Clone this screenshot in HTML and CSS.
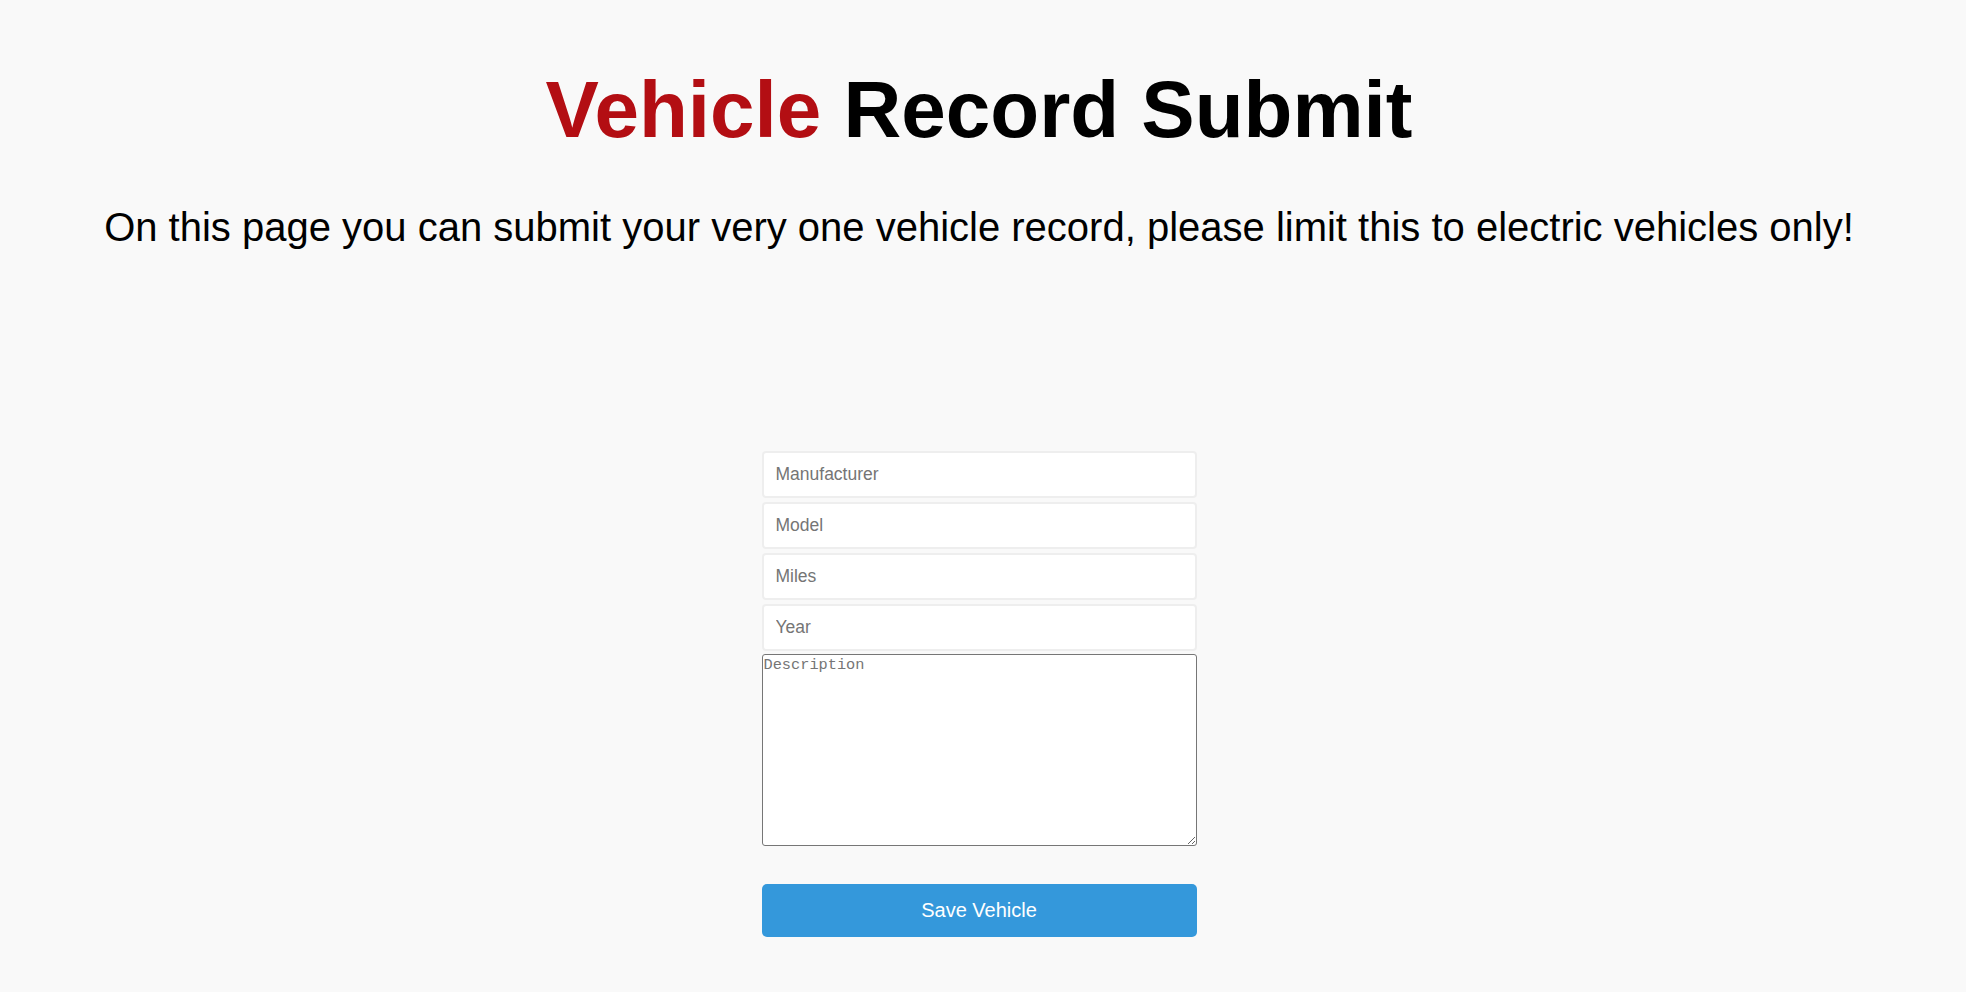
FILE: index.html
```html
<!DOCTYPE html>
<html lang="en">
<head>
<meta charset="utf-8">
<title>Vehicle Record Submit</title>
<link rel="stylesheet" href="styles.css">
</head>
<body>
  <main class="page">
    <h1 class="title"><span class="title-accent">Vehicle</span> Record Submit</h1>
    <p class="intro">On this page you can submit your very one vehicle record, please limit this to electric vehicles only!</p>
    <form class="vehicle-form">
      <input class="field" type="text" placeholder="Manufacturer">
      <input class="field" type="text" placeholder="Model">
      <input class="field" type="text" placeholder="Miles">
      <input class="field" type="text" placeholder="Year">
      <textarea class="description" placeholder="Description"></textarea>
      <button class="save-btn" type="button">Save Vehicle</button>
    </form>
  </main>
</body>
</html>
```

FILE: styles.css
```css
html, body {
  margin: 0;
  padding: 0;
  background: #f9f9f9;
}

body {
  font-family: "Liberation Sans", Arial, sans-serif;
  color: #000;
}

.page {
  padding-right: 8px;
  padding-bottom: 40px;
}

.title {
  margin: 64px 0 49px;
  font-size: 80px;
  font-weight: bold;
  line-height: normal;
  text-align: center;
}

.title-accent {
  color: #b30e13;
}

.intro {
  margin: 0;
  font-size: 40px;
  line-height: normal;
  text-align: center;
}

.vehicle-form {
  width: 435px;
  margin: 201px auto 0;
  display: flex;
  flex-direction: column;
}

.field {
  box-sizing: border-box;
  height: 47px;
  margin: 0 0 4px;
  padding: 0 12px;
  border: 2px solid #eeeeee;
  border-radius: 4px;
  background: #fff;
  font-family: "Liberation Sans", Arial, sans-serif;
  font-size: 17.5px;
  color: #333;
  outline: none;
}

.field:last-of-type {
  margin-bottom: 3px;
}

.field::placeholder {
  color: #757575;
}

.description {
  box-sizing: border-box;
  height: 192px;
  margin: 0;
  padding: 1px;
  border: 1px solid #767676;
  border-radius: 3px;
  background: #fff;
  font-family: "Liberation Mono", "Courier New", monospace;
  font-size: 15.3px;
  color: #333;
}

.description::placeholder {
  color: #757575;
}

.save-btn {
  margin-top: 38px;
  height: 53px;
  border: none;
  border-radius: 5px;
  background: #3498db;
  color: #fff;
  font-family: "Liberation Sans", Arial, sans-serif;
  font-size: 20px;
  cursor: pointer;
}
```
